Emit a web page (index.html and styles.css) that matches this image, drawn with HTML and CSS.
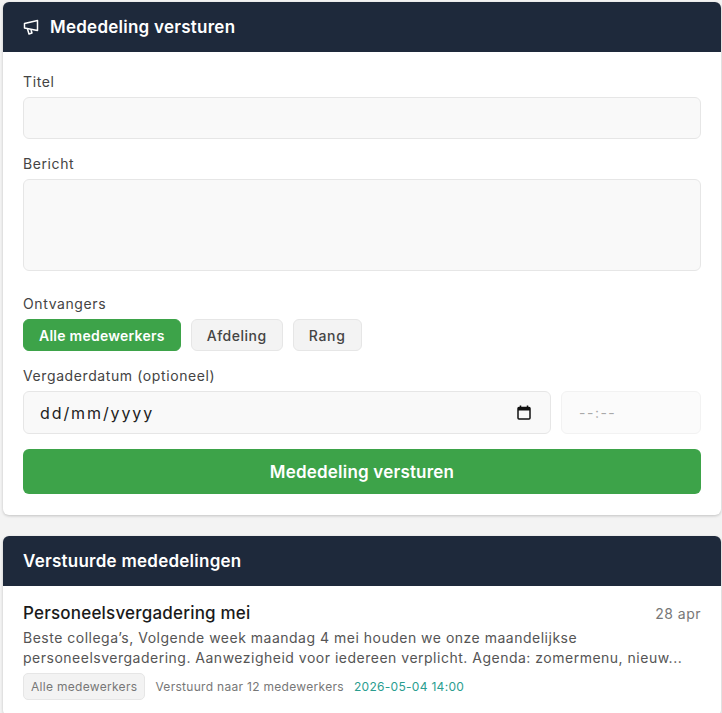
FILE: index.html
```html
<!DOCTYPE html>
<html lang="nl">
<head>
  <meta charset="UTF-8" />
  <meta name="viewport" content="width=device-width, initial-scale=1.0"/>
  <title>Mededelingen</title>
  <link rel="stylesheet" href="styles.css">
</head>
<body>

  <section class="card">
    <h2 class="card-head">
      <svg class="head-icon" viewBox="0 0 16 16" width="16" height="16" fill="none" stroke="currentColor" stroke-width="1.5" stroke-linejoin="round">
        <path d="M1.5 4.5 14.5 1.5V11.5L1.5 9z"/>
        <path d="M4.5 10 6 15l3-1-1-3"/>
      </svg>
      Mededeling versturen
    </h2>
    <form class="card-body">
      <label class="label">Titel</label>
      <input class="field field-title" type="text">

      <label class="label">Bericht</label>
      <textarea class="field field-message"></textarea>

      <label class="label">Ontvangers</label>
      <div class="choices">
        <button type="button" class="choice active">Alle medewerkers</button>
        <button type="button" class="choice">Afdeling</button>
        <button type="button" class="choice choice-rang">Rang</button>
      </div>

      <label class="label">Vergaderdatum (optioneel)</label>
      <div class="date-row">
        <div class="field field-date">
          dd/mm/yyyy
          <svg viewBox="0 0 14 15" width="14" height="15" fill="none" stroke="#111" stroke-width="1.5">
            <rect x="1" y="2.5" width="12" height="11.5" rx="1"/>
            <path d="M1 4.2h12" stroke-width="2.5"/>
            <path d="M3.5 0.5v2M10.5 0.5v2"/>
          </svg>
        </div>
        <div class="field field-time">--:--</div>
      </div>

      <button type="button" class="submit">Mededeling versturen</button>
    </form>
  </section>

  <section class="card">
    <h2 class="card-head">Verstuurde mededelingen</h2>
    <article class="item">
      <div class="item-top">
        <h3 class="item-title">Personeelsvergadering mei</h3>
        <span class="item-date">28 apr</span>
      </div>
      <p class="item-text">Beste collega’s, Volgende week maandag 4 mei houden we onze maandelijkse personeelsvergadering. Aanwezigheid voor iedereen verplicht. Agenda: zomermenu, nieuw...</p>
      <div class="item-meta">
        <span class="tag">Alle medewerkers</span>
        <span>Verstuurd naar 12 medewerkers</span>
        <span class="meeting">2026-05-04 14:00</span>
      </div>
    </article>
  </section>

</body>
</html>
```

FILE: styles.css
```css
* {
  box-sizing: border-box;
}
html, body {
  height: 713px;
  overflow: hidden;
}
body {
  margin: 0;
  padding: 2px 1px 0 3px;
  background: #f3f3f3;
  font-family: Inter, "Liberation Sans", sans-serif;
  color: #333;
}
.card {
  background: #fff;
  border-radius: 6px;
  box-shadow: 0 1px 3px rgba(0, 0, 0, 0.2);
  margin-bottom: 21px;
  overflow: hidden;
}
.card-head {
  display: flex;
  align-items: center;
  gap: 11px;
  height: 50px;
  margin: 0;
  padding: 0 20px;
  background: #1e293b;
  color: #fff;
  font-size: 17px;
  font-weight: 600;
  letter-spacing: 0.25px;
}
.head-icon {
  flex: none;
}
.card-body {
  display: flex;
  flex-direction: column;
  padding: 20px 20px 21px;
}
.label {
  font-size: 14px;
  line-height: 20px;
  letter-spacing: 0.6px;
  color: #444;
  margin-bottom: 5px;
}
.field {
  border: 1px solid #e6e6e6;
  border-radius: 6px;
  background: #f9f9f9;
  font-family: inherit;
  display: block;
}
.field-title {
  height: 42px;
  margin-bottom: 15px;
}
.field-message {
  height: 92px;
  margin-bottom: 23px;
  resize: none;
}
.choices {
  display: flex;
  gap: 10px;
  margin-bottom: 15px;
}
.choice {
  height: 32px;
  padding: 0 15px;
  border: 1px solid #e6e6e6;
  border-radius: 6px;
  background: #f3f3f3;
  color: #444;
  font-family: inherit;
  font-size: 14px;
  font-weight: 500;
  letter-spacing: 0.5px;
}
.choice.active {
  background: #3da349;
  border-color: #3da349;
  color: #fff;
  font-weight: 600;
  letter-spacing: 0.25px;
}
.choice-rang {
  letter-spacing: 0.75px;
}
.date-row {
  display: flex;
  gap: 10px;
  margin-bottom: 15px;
}
.field-date {
  flex: 1;
  display: flex;
  align-items: center;
  justify-content: space-between;
  height: 43px;
  padding: 0 19px 0 16px;
  font-size: 16px;
  letter-spacing: 1.9px;
  color: #222;
}
.field-time {
  display: flex;
  align-items: center;
  width: 140px;
  height: 43px;
  padding: 0 17px;
  font-size: 14px;
  letter-spacing: 1.5px;
  color: #555;
  opacity: 0.5;
}
.submit {
  height: 45px;
  border: none;
  border-radius: 6px;
  background: #3da349;
  color: #fff;
  font-family: inherit;
  font-size: 17px;
  font-weight: 600;
  letter-spacing: 0.2px;
}
.item {
  padding: 16px 20px;
}
.item-top {
  display: flex;
  justify-content: space-between;
  align-items: center;
}
.item-title {
  margin: 0;
  font-size: 17px;
  font-weight: 500;
  line-height: 22px;
  letter-spacing: 0.2px;
  color: #1a1a1a;
}
.item-date {
  font-size: 14px;
  letter-spacing: 0.5px;
  color: #777;
}
.item-text {
  margin: 4px 0 5px;
  font-size: 14px;
  line-height: 20px;
  letter-spacing: 0.5px;
  color: #555;
}
.item-meta {
  display: flex;
  align-items: center;
  gap: 10px;
  font-size: 12px;
  letter-spacing: 0.3px;
  color: #777;
}
.tag {
  padding: 5px 7px;
  border: 1px solid #e6e6e6;
  border-radius: 5px;
  background: #f3f3f3;
}
.meeting {
  color: #2a9d8f;
}
```
